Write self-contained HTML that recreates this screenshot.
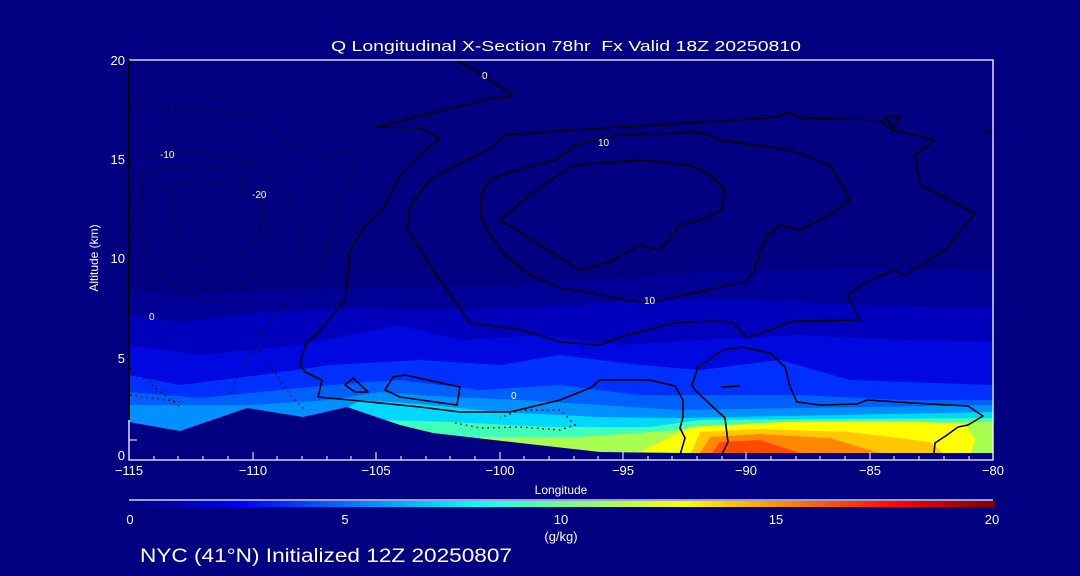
<!DOCTYPE html>
<html><head><meta charset="utf-8"><style>
html,body{margin:0;padding:0;background:#000080;}
svg{display:block}
text{font-family:"Liberation Sans",sans-serif;fill:#fff;}
</style></head><body>
<svg width="1080" height="576" viewBox="0 0 1080 576" xmlns="http://www.w3.org/2000/svg">
<defs>
<linearGradient id="jet" x1="0" x2="1" y1="0" y2="0">
<stop offset="0" stop-color="#000080"/>
<stop offset="0.13" stop-color="#0000ff"/>
<stop offset="0.40" stop-color="#00ffff"/>
<stop offset="0.64" stop-color="#ffff00"/>
<stop offset="0.89" stop-color="#ff0000"/>
<stop offset="1" stop-color="#800000"/>
</linearGradient>
</defs>
<rect width="1080" height="576" fill="#000080"/>
<text x="331" y="51" font-size="15" textLength="470" lengthAdjust="spacingAndGlyphs" xml:space="preserve">Q Longitudinal X-Section 78hr  Fx Valid 18Z 20250810</text>
<g stroke="none">
<polygon fill="#000096" points="129,290 180,295 260,290 400,287 520,285 620,278 700,272 850,268 993,270 993,457 129,457"/>
<polygon fill="#0000bc" points="129,315 180,322 260,312 350,308 450,310 580,305 650,300 750,300 870,305 993,308 993,457 129,457"/>
<polygon fill="#0008e0" points="129,345 200,355 300,345 400,325 460,340 540,335 620,345 700,340 800,335 900,340 993,342 993,457 129,457"/>
<polygon fill="#0030ff" points="129,375 180,385 260,375 330,365 420,360 500,365 560,355 640,365 700,370 780,360 850,380 993,385 993,457 129,457"/>
<polygon fill="#0060ff" points="129,392 200,398 280,390 330,385 400,380 480,390 560,385 640,395 720,395 800,395 900,400 993,400 993,457 129,457"/>
<polygon fill="#0090ff" points="129,405 250,405 330,400 380,392 450,397 520,400 600,405 680,410 800,408 993,405 993,457 129,457"/>
<polygon fill="#00d8ff" points="340,412 360,400 420,404 500,412 600,417 680,418 993,412 993,457 340,457"/>
<polygon fill="#40ffb8" points="380,420 450,422 550,427 650,427 700,420 993,418 993,457 380,457"/>
<polygon fill="#a8ff50" points="480,437 580,437 680,430 720,425 993,422 993,457 480,457"/>
<polygon fill="#ffff00" points="640,452 690,427 780,422 900,421 965,424 975,440 970,455"/>
<polygon fill="#ffc800" points="690,455 700,432 760,429 850,432 930,442 945,455"/>
<polygon fill="#ff8800" points="700,453 710,437 760,434 830,438 880,453"/>
<polygon fill="#ff4800" points="712,453 720,442 760,440 800,453"/>
<polygon fill="#000080" points="129,422 180,431 247,408 303,417 347,407 400,425 433,433 520,443 600,452 680,453 993,453 993,460 129,460"/>
</g>
<g fill="none" stroke="#000" stroke-width="1.6" stroke-linejoin="round">
<polyline points="455,60 478,72 513,95 485,100 455,107 375,127 420,128 440,138 420,155 400,175 385,205 362,230 350,250 345,300 320,330 305,345 300,365 305,372 322,380 318,397 350,400 420,407 460,412 510,412 560,400 590,388 600,380 650,380 675,386 683,400 683,417 680,428 685,438 680,455"/>
<polyline points="600,345 560,342 523,330 470,323 433,270 407,228 410,205 430,180 450,168 487,150 505,135 600,128 770,118 790,112 800,118 880,120 893,130 935,140 915,155 920,185 975,213 945,250 905,275 895,270 870,280 847,295 860,320 793,321 747,338 732,322 713,321 673,323 623,336 600,345"/>
<polyline points="580,291 637,302 657,301 747,281 753,272 765,238 780,225 800,230 830,215 850,200 830,165 790,150 720,140 700,132 620,135 575,145 555,160 510,172 490,180 480,195 480,215 490,235 505,255 530,275 560,288 580,291"/>
<polyline points="500,220 530,195 550,180 575,165 640,160 690,165 710,175 725,190 722,210 700,220 680,225 660,250 640,245 610,262 580,270 540,245 520,232 500,220"/>
<polyline points="722,454 728,442 725,418 713,407 695,390 692,385 698,367 723,350 743,347 770,353 785,367 790,387 797,402 820,405 857,404 867,400 930,404 968,406 983,416 968,425 958,427 947,435 935,443 934,453"/>
<polyline points="721,387 740,386"/>
<polygon points="345,385 353,378 368,392 355,392"/>
<polygon points="385,390 393,377 405,375 460,387 457,405 435,402 400,397"/>
<polygon points="885,116 900,116 893,128"/>
<polyline points="985,130 993,133"/>
</g>
<g fill="none" stroke="#000" stroke-width="1.4" stroke-dasharray="1.5,4">
<polyline points="130,107 200,109 250,115 280,135 300,150 320,155 355,150"/>
<polyline points="150,155 200,150 250,165 285,190 300,220 300,260 285,300 265,330 245,360 230,395"/>
<polyline points="140,175 170,165 230,170 260,195 270,230 260,270 230,300 200,300 165,280 140,240 140,200 140,175"/>
<polyline points="170,185 200,180 230,188 255,195 265,215 255,240 240,260 225,270 200,260 180,235 170,210 170,185"/>
<polyline points="355,160 340,200 330,240 320,270"/>
<polyline points="130,368 180,407"/>
<polyline points="130,395 180,402"/>
<polyline points="260,350 290,395 305,410"/>
<polyline points="455,423 480,428 520,427 560,430 575,425 560,410 520,410 500,418"/>
</g>
<g font-size="10">
<text x="482" y="79">0</text><text x="598" y="146">10</text><text x="644" y="304">10</text>
<text x="160" y="158">-10</text><text x="252" y="198">-20</text><text x="149" y="320">0</text><text x="511" y="399">0</text>
</g>
<g stroke="#fff" stroke-width="1.3" fill="none">
<polyline points="129,60 993,60 993,460 129,460 129,420"/>
</g>
<line x1="129" y1="60" x2="129" y2="420" stroke="#000" stroke-width="2"/>
<g stroke="#fff" stroke-width="1">
<path d="M129,460v-8M253,460v-8M376,460v-8M500,460v-8M623,460v-8M746,460v-8M870,460v-8M993,460v-8"/>
<path d="M154,460v-4M178,460v-4M203,460v-4M228,460v-4M277,460v-4M302,460v-4M327,460v-4M351,460v-4M401,460v-4M426,460v-4M450,460v-4M475,460v-4M524,460v-4M549,460v-4M574,460v-4M598,460v-4M648,460v-4M672,460v-4M697,460v-4M722,460v-4M771,460v-4M796,460v-4M820,460v-4M845,460v-4M894,460v-4M919,460v-4M944,460v-4M969,460v-4"/>
<path d="M129,440h8"/>
</g>
<g font-size="13" text-anchor="middle">
<text x="129" y="475">−115</text><text x="253" y="475">−110</text><text x="376" y="475">−105</text><text x="500" y="475">−100</text><text x="623" y="475">−95</text><text x="746" y="475">−90</text><text x="870" y="475">−85</text><text x="993" y="475">−80</text>
<text x="561" y="494" font-size="12">Longitude</text>
</g>
<g font-size="13" text-anchor="end">
<text x="125" y="65">20</text><text x="125" y="164">15</text><text x="125" y="263">10</text><text x="125" y="363">5</text><text x="125" y="460">0</text>
</g>
<text x="0" y="0" font-size="12" text-anchor="middle" transform="translate(98,258) rotate(-90)">Altitude (km)</text>
<line x1="129" y1="500" x2="993" y2="500" stroke="#fff" stroke-width="1.3"/>
<rect x="129" y="501" width="866" height="6" fill="url(#jet)"/>
<g font-size="13" text-anchor="middle">
<text x="130" y="524">0</text><text x="345" y="524">5</text><text x="561" y="524">10</text><text x="776" y="524">15</text><text x="992" y="524">20</text>
<text x="561" y="541">(g/kg)</text>
</g>
<text x="140" y="562" font-size="19" textLength="372" lengthAdjust="spacingAndGlyphs">NYC (41°N) Initialized 12Z 20250807</text>
</svg>
</body></html>
